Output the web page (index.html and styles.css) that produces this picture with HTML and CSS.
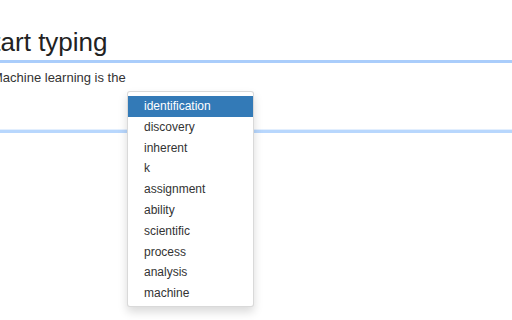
FILE: index.html
```html
<!DOCTYPE html>
<html>
<head>
<meta charset="utf-8">
<link rel="stylesheet" href="styles.css">
</head>
<body>
<div class="page">
  <h1 class="title">Start typing</h1>
  <div class="editor">Machine learning is the</div>
</div>
<ul class="menu">
  <li class="item active">identification</li>
  <li class="item">discovery</li>
  <li class="item">inherent</li>
  <li class="item">k</li>
  <li class="item">assignment</li>
  <li class="item">ability</li>
  <li class="item">scientific</li>
  <li class="item">process</li>
  <li class="item">analysis</li>
  <li class="item">machine</li>
</ul>
</body>
</html>
```
FILE: styles.css
```css
html, body {
  margin: 0;
  padding: 0;
  background: #ffffff;
  overflow: hidden;
  width: 512px;
  height: 320px;
}
body {
  font-family: "Liberation Sans", Arial, sans-serif;
  color: #333333;
  position: relative;
}
.page {
  display: flex;
  flex-direction: column;
}
.title {
  margin: 27px 0 0 -24px;
  font-size: 26px;
  line-height: 30px;
  font-weight: 500;
  color: #222222;
}
.editor {
  margin: 3px 0 0 -20px;
  width: 560px;
  height: 67px;
  box-sizing: content-box;
  padding: 0 0 0 12px;
  padding-top: 0;
  border-top: 3px solid #aacdfb;
  border-bottom: 3px solid #b8d7fd;
  box-shadow: inset 0 -1px 0 #e3effe;
  font-size: 13px;
  line-height: 16px;
  color: #333333;
}
.editor::before {
  content: "";
  display: block;
  height: 7px;
}
.menu {
  position: absolute;
  left: 127px;
  top: 91px;
  width: 125px;
  margin: 0;
  padding: 4px 0 2px;
  list-style: none;
  background: #ffffff;
  border: 1px solid rgba(0, 0, 0, 0.15);
  border-radius: 3px;
  box-shadow: 0 5px 10px rgba(0, 0, 0, 0.15);
}
.item {
  height: 20.8px;
  line-height: 20.8px;
  padding: 0 16px;
  font-size: 12px;
  color: #333333;
  white-space: nowrap;
}
.item.active {
  background: #337ab7;
  color: #ffffff;
}
```
